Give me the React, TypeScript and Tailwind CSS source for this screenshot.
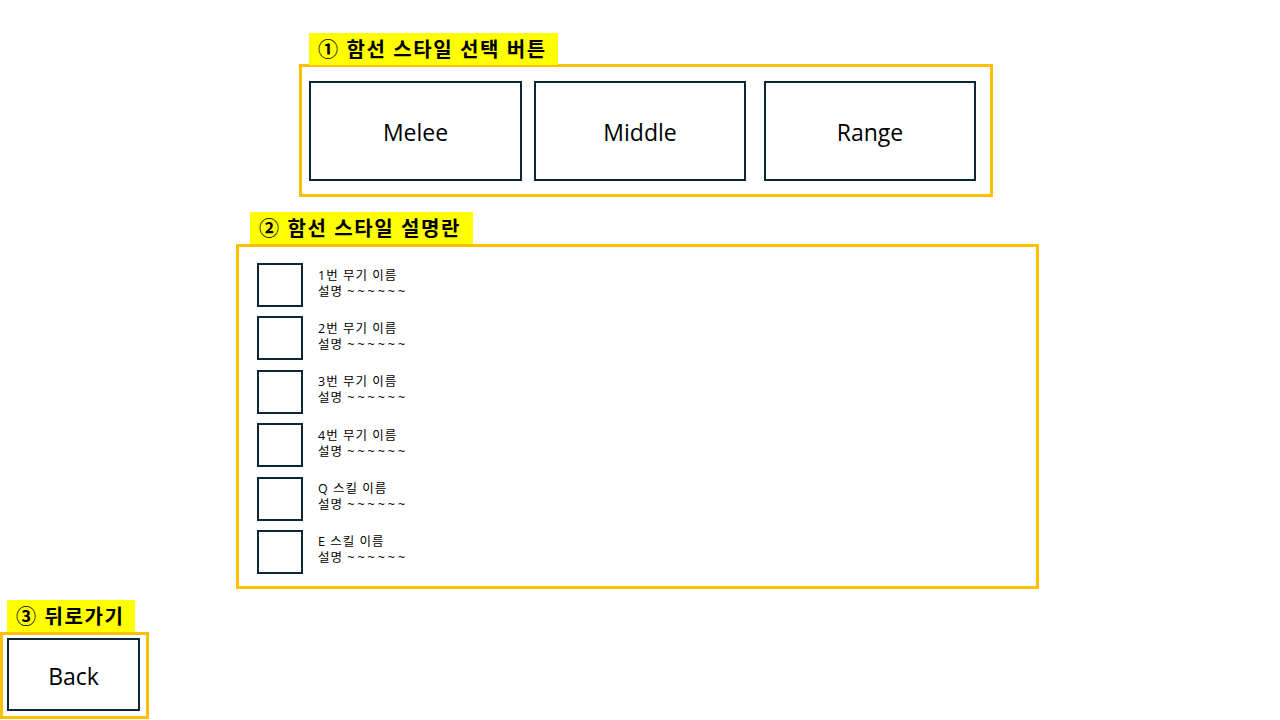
const rows = [
  { name: '1번 무기 이름', desc: '설명 ~~~~~~' },
  { name: '2번 무기 이름', desc: '설명 ~~~~~~' },
  { name: '3번 무기 이름', desc: '설명 ~~~~~~' },
  { name: '4번 무기 이름', desc: '설명 ~~~~~~' },
  { name: 'Q 스킬 이름', desc: '설명 ~~~~~~' },
  { name: 'E 스킬 이름', desc: '설명 ~~~~~~' },
];

function Tag({ label, className }: { label: string; className: string }) {
  return (
    <div
      className={`relative z-10 flex h-[32px] items-center bg-[#ffff00] px-[9px] pt-[1px] text-[20px] font-bold leading-none tracking-[1.6px] text-black ${className}`}
    >
      {label}
    </div>
  );
}

function StyleButton({ label, className }: { label: string; className: string }) {
  return (
    <div
      className={`flex h-[100px] w-[212px] items-center justify-center border-2 border-[#0c2636] pt-[3px] text-[23px] text-black ${className}`}
    >
      {label}
    </div>
  );
}

export default function App() {
  return (
    <div
      className="flex h-[720px] w-[1280px] flex-col overflow-hidden bg-white"
      style={{ fontFamily: '"Open Sans", "Noto Sans CJK KR", sans-serif' }}
    >
      {/* ① style select */}
      <div className="ml-[299px] mt-[33px] flex flex-col">
        <Tag label="① 함선 스타일 선택 버튼" className="ml-[10px] w-[249px]" />
        <div className="-mt-[1px] flex h-[133px] w-[694px] border-[3px] border-[#ffc000] pl-[7px] pt-[14px]">
          <StyleButton label="Melee" className="w-[213px]" />
          <StyleButton label="Middle" className="ml-[12px]" />
          <StyleButton label="Range" className="ml-[18px]" />
        </div>
      </div>

      {/* ② description */}
      <div className="ml-[236px] mt-[15px] flex flex-col">
        <Tag label="② 함선 스타일 설명란" className="ml-[14px] w-[223px]" />
        <div className="flex h-[345px] w-[803px] flex-col gap-[9.4px] border-[3px] border-[#ffc000] pl-[18px] pt-[16px]">
          {rows.map((r) => (
            <div key={r.name} className="flex h-[44px] items-center">
              <div className="h-[44px] w-[46px] border-2 border-[#0c2636]" />
              <div className="-mt-[3px] ml-[15px] flex flex-col text-[12.5px] leading-[16px] tracking-[1px] text-black">
                <span>{r.name}</span>
                <span>
                  설명 <span className="tracking-[3px]">~~~~~~</span>
                </span>
              </div>
            </div>
          ))}
        </div>
      </div>

      {/* ③ back */}
      <div className="mt-[11px] flex flex-col">
        <Tag label="③ 뒤로가기" className="ml-[7px] w-[128px]" />
        <div className="flex h-[87px] w-[149px] border-[3px] border-[#ffc000] pl-[4px] pt-[3px]">
          <div className="flex h-[73px] w-[133px] items-center justify-center border-2 border-[#0c2636] pt-[3px] text-[23px] text-black">
            Back
          </div>
        </div>
      </div>
    </div>
  );
}
